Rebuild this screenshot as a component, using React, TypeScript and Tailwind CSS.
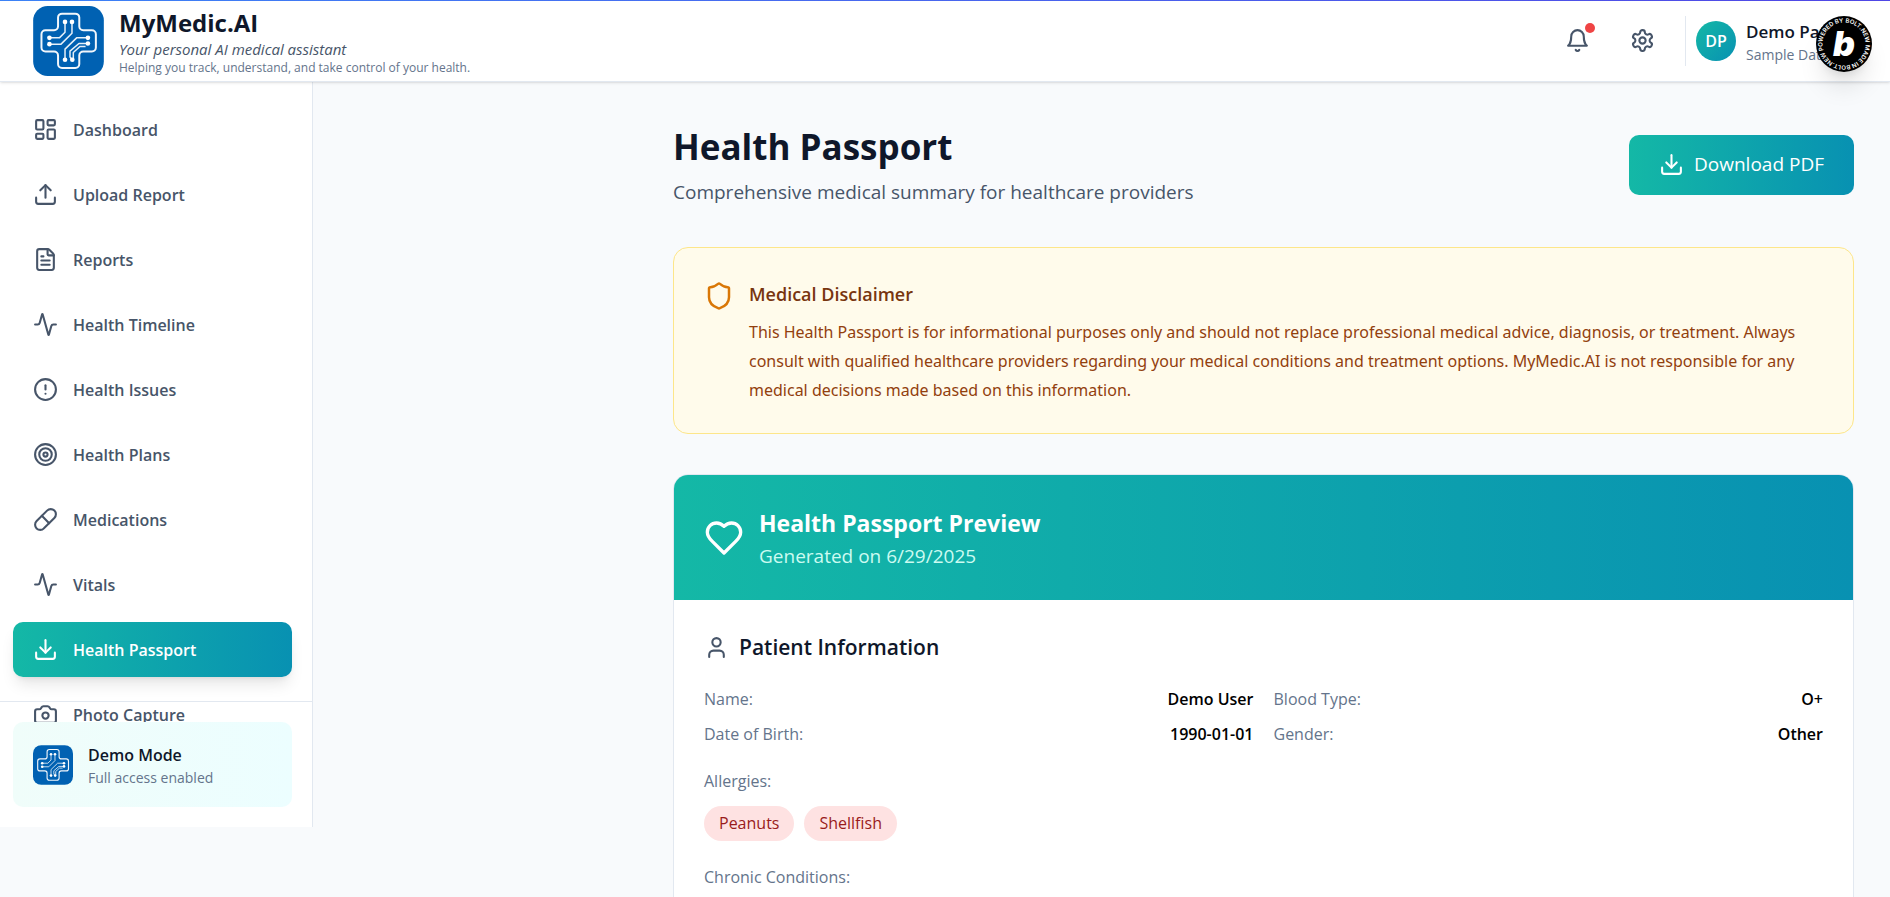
import {
  Activity, Camera, CircleAlert, Download, FileText,
  LayoutDashboard, Pill, Shield, Target, Upload, User
} from "lucide-react";
import clsx from "clsx";

interface NavItem {
  icon: typeof Activity;
  label: string;
  active?: boolean;
}

const navItems: NavItem[] = [
  { icon: LayoutDashboard, label: "Dashboard" },
  { icon: Upload, label: "Upload Report" },
  { icon: FileText, label: "Reports" },
  { icon: Activity, label: "Health Timeline" },
  { icon: CircleAlert, label: "Health Issues" },
  { icon: Target, label: "Health Plans" },
  { icon: Pill, label: "Medications" },
  { icon: Activity, label: "Vitals" },
  { icon: Download, label: "Health Passport", active: true },
  { icon: Camera, label: "Photo Capture" }
];

const patient = [
  { label: "Name:", value: "Demo User" },
  { label: "Blood Type:", value: "O+" },
  { label: "Date of Birth:", value: "1990-01-01" },
  { label: "Gender:", value: "Other" }
];

const allergies = ["Peanuts", "Shellfish"];

const Logo = ({ className }: { className?: string }) => (
  <svg viewBox="0 0 213 211" className={className} fill="none" aria-hidden="true">
    <rect width="213" height="211" rx="44" fill="#0061b2" />
    <path
      d="M87 23h40a12 12 0 0 1 12 12v26a12 12 0 0 0 12 12h26a12 12 0 0 1 12 12v40a12 12 0 0 1-12 12h-26a12 12 0 0 0-12 12v26a12 12 0 0 1-12 12H87a12 12 0 0 1-12-12v-26a12 12 0 0 0-12-12H37a12 12 0 0 1-12-12V85a12 12 0 0 1 12-12h26a12 12 0 0 0 12-12V35a12 12 0 0 1 12-12z"
      stroke="#f1f6fb"
      strokeWidth="6"
    />
    <g stroke="#e6f0f8" strokeWidth="4.5" strokeLinejoin="round">
      <path d="M96 48v31L79 96H49" />
      <path d="M117 48v34l-33 33H49" />
      <path d="M165 96h-34l-35 34v32" />
      <path d="M165 113h-27l-27 23v18l7 8" />
      <path d="M158 122h-17l-20 18v22" />
    </g>
    <g fill="#fff">
      <circle cx="96" cy="48" r="7" />
      <circle cx="117" cy="48" r="7" />
      <circle cx="49" cy="96" r="7" />
      <circle cx="49" cy="115" r="7" />
      <circle cx="165" cy="96" r="7" />
      <circle cx="165" cy="113" r="7" />
      <circle cx="96" cy="162" r="7" />
      <circle cx="118" cy="162" r="7" />
    </g>
  </svg>
);

const BellIcon = () => (
  <svg viewBox="0 0 24 24" className="size-[25px]" fill="none" stroke="currentColor" strokeWidth="2" strokeLinecap="round" strokeLinejoin="round">
    <path d="M6 8a6 6 0 0 1 12 0c0 7 3 9 3 9H3s3-2 3-9" />
    <path d="M10.3 21a1.94 1.94 0 0 0 3.4 0" />
  </svg>
);

const GearIcon = () => (
  <svg viewBox="0 0 24 24" className="size-[25px]" fill="none" stroke="currentColor" strokeWidth="2" strokeLinecap="round" strokeLinejoin="round">
    <path d="M12.22 2h-.44a2 2 0 0 0-2 2v.18a2 2 0 0 1-1 1.73l-.43.25a2 2 0 0 1-2 0l-.15-.08a2 2 0 0 0-2.73.73l-.22.38a2 2 0 0 0 .73 2.73l.15.1a2 2 0 0 1 1 1.72v.51a2 2 0 0 1-1 1.74l-.15.09a2 2 0 0 0-.73 2.73l.22.38a2 2 0 0 0 2.73.73l.15-.08a2 2 0 0 1 2 0l.43.25a2 2 0 0 1 1 1.73V20a2 2 0 0 0 2 2h.44a2 2 0 0 0 2-2v-.18a2 2 0 0 1 1-1.73l.43-.25a2 2 0 0 1 2 0l.15.08a2 2 0 0 0 2.73-.73l.22-.39a2 2 0 0 0-.73-2.73l-.15-.08a2 2 0 0 1-1-1.74v-.5a2 2 0 0 1 1-1.74l.15-.09a2 2 0 0 0 .73-2.73l-.22-.38a2 2 0 0 0-2.73-.73l-.15.08a2 2 0 0 1-2 0l-.43-.25a2 2 0 0 1-1-1.73V4a2 2 0 0 0-2-2z" />
    <circle cx="12" cy="12" r="3" />
  </svg>
);

const HeartIcon = () => (
  <svg viewBox="0 0 24 24" className="size-10 shrink-0" fill="none" stroke="currentColor" strokeWidth="2" strokeLinecap="round" strokeLinejoin="round">
    <path d="M19 14c1.49-1.46 3-3.21 3-5.5A5.5 5.5 0 0 0 16.5 3c-1.76 0-3 .5-4.5 2-1.5-1.5-2.74-2-4.5-2A5.5 5.5 0 0 0 2 8.5c0 2.3 1.5 4.05 3 5.5l7 7Z" />
  </svg>
);

const BoltBadge = () => (
  <a href="https://bolt.new" aria-label="Powered by Bolt.new" className="absolute top-4 right-[18px] rounded-full shadow-xl">
    <svg viewBox="0 0 56 56" className="size-14">
      <circle cx="28" cy="28" r="28" fill="#000" />
      <path id="ring" d="M7.5 34.5a21.5 21.5 0 1 1 41-13a21.5 21.5 0 1 1-41 13" fill="none" />
      <text fill="#fff" className="font-['Inter',sans-serif] text-[6px] font-semibold">
        <textPath href="#ring">POWERED BY BOLT.NEW MADE IN BOLT.NEW</textPath>
      </text>
      <text x="28" y="40" textAnchor="middle" fill="#fff" className="font-['Inter',sans-serif] text-[34px] font-black italic">b</text>
    </svg>
  </a>
);

const Header = () => (
  <header className="relative z-10 flex h-[82px] items-center justify-between border-b border-[#e2e8f0] bg-white pl-[33px] shadow-sm">
    <div className="absolute inset-x-0 top-0 h-px bg-linear-to-r from-[#3b82f6] to-[#4f46e5]" />
    <div className="flex items-center gap-[15px]">
      <Logo className="h-[70px] w-[71px]" />
      <div className="pt-0.5">
        <h1 className="text-[24px] leading-[30px] font-bold text-[#0f172a]">MyMedic.AI</h1>
        <p className="text-[15px] leading-[22px] text-[#475569] italic">Your personal AI medical assistant</p>
        <p className="text-[12px] leading-[16px] text-[#64748b]">Helping you track, understand, and take control of your health.</p>
      </div>
    </div>
    <div className="flex items-center">
      <button type="button" aria-label="Notifications" className="relative p-[10px] text-[#475569]">
        <BellIcon />
        <span className="absolute top-[5px] right-[5px] size-[10px] rounded-full bg-[#ef4444]" />
      </button>
      <button type="button" aria-label="Settings" className="ml-5 p-[10px] text-[#475569]">
        <GearIcon />
      </button>
      <div className="ml-5 flex h-[50px] w-[205px] items-center gap-[10px] border-l border-[#e2e8f0] pl-[10px]">
        <div className="flex size-10 shrink-0 items-center justify-center rounded-full bg-linear-to-br/srgb from-[#14b8a6] to-[#0891b2] text-[16px] font-semibold text-white">DP</div>
        <div className="overflow-hidden pt-1 whitespace-nowrap">
          <p className="text-[17px] leading-[25px] font-semibold text-[#0f172a]">Demo Patient</p>
          <p className="text-[14px] leading-[22px] text-[#64748b]">Sample Data</p>
        </div>
      </div>
    </div>
    <BoltBadge />
  </header>
);

const Sidebar = () => (
  <aside className="relative w-[313px] shrink-0 border-r border-[#e2e8f0] bg-white pt-5 pr-5 pb-[85px] pl-[13px]">
    <nav className="flex flex-col gap-[10px]">
      {navItems.map((item, index) => {
        const Icon = item.icon;
        return (
          <a
            key={index}
            href="#"
            className={clsx(
              "flex h-[55px] items-center gap-[15px] rounded-[10px] px-5 text-[16px] font-semibold",
              item.active
                ? "bg-linear-to-r/srgb from-[#14b8a6] to-[#0891b2] text-white shadow-lg"
                : "text-[#475569]"
            )}
          >
            <Icon className="size-[25px]" />
            {item.label}
          </a>
        );
      })}
    </nav>
    <div className="absolute inset-x-0 bottom-0 border-t border-[#e2e8f0] py-5 pr-5 pl-[13px]">
      <div className="flex h-[85px] items-center gap-[15px] rounded-[10px] bg-linear-to-r/srgb from-[#f0fdfa] to-[#ecfeff] px-5">
        <Logo className="size-10" />
        <div className="pt-0.5">
          <p className="text-[16px] leading-[25px] font-semibold text-[#0f172a]">Demo Mode</p>
          <p className="text-[14px] leading-[20px] text-[#64748b]">Full access enabled</p>
        </div>
      </div>
    </div>
  </aside>
);

const PassportPreview = () => (
  <section className="overflow-hidden rounded-[15px] border border-[#e2e8f0] bg-white">
    <div className="flex items-center gap-[15px] bg-linear-to-r/srgb from-[#14b8a6] to-[#0891b2] p-[30px] text-white">
      <HeartIcon />
      <div>
        <h2 className="text-[23px] leading-[37px] font-bold">Health Passport Preview</h2>
        <p className="text-[19px] leading-[28px] text-[#ccfbf1]">Generated on 6/29/2025</p>
      </div>
    </div>
    <div className="p-[30px]">
      <h3 className="flex items-center gap-[10px] text-[21px] leading-[35px] font-semibold text-[#0f172a]">
        <User className="size-[25px] text-[#475569]" />
        Patient Information
      </h3>
      <dl className="mt-[22px] grid grid-cols-2 gap-x-5 gap-y-[10px] text-[16px] leading-[25px]">
        {patient.map((field) => (
          <div key={field.label} className="flex justify-between">
            <dt className="text-[#64748b]">{field.label}</dt>
            <dd className="font-semibold text-black">{field.value}</dd>
          </div>
        ))}
      </dl>
      <div className="mt-[22px] text-[16px] leading-[25px]">
        <p className="text-[#64748b]">Allergies:</p>
        <div className="mt-3 flex gap-[10px]">
          {allergies.map((allergy) => (
            <span key={allergy} className="rounded-full bg-[#fee2e2] px-[15px] py-[5px] text-[#991b1b]">{allergy}</span>
          ))}
        </div>
      </div>
      <p className="mt-6 text-[16px] leading-[25px] text-[#64748b]">Chronic Conditions:</p>
    </div>
  </section>
);

const App = () => {
  return (
    <div className="min-h-screen bg-[#f8fafc] font-['Open_Sans',sans-serif]">
      <Header />
      <div className="flex items-start">
        <Sidebar />
        <main className="ml-[360px] min-w-0 flex-1 pt-10 pr-9">
          <div className="flex items-center justify-between">
            <div>
              <h1 className="text-[35px] leading-[50px] font-bold text-[#0f172a]">Health Passport</h1>
              <p className="mt-[5px] text-[19px] leading-[30px] text-[#475569]">Comprehensive medical summary for healthcare providers</p>
            </div>
            <button type="button" className="flex h-[60px] items-center gap-[10px] rounded-[10px] bg-linear-to-r/srgb from-[#14b8a6] to-[#0891b2] px-[30px] text-[19px] text-white">
              <Download className="size-[25px]" />
              Download PDF
            </button>
          </div>

          <section className="mt-10 flex items-start gap-[15px] rounded-[15px] border border-[#fde68a] bg-[#fffbeb] px-[30px] pt-[30px] pb-7">
            <Shield className="mt-[3px] size-[30px] shrink-0 text-[#d97706]" />
            <div>
              <h3 className="text-[18px] leading-[32px] font-semibold text-[#78350f]">Medical Disclaimer</h3>
              <p className="mt-2 font-['Noto_Sans',sans-serif] text-[16px] leading-[29px] text-[#92400e]">
                This Health Passport is for informational purposes only and should not replace professional medical advice,
                diagnosis, or treatment. Always consult with qualified healthcare providers regarding your medical
                conditions and treatment options. MyMedic.AI is not responsible for any medical decisions made based on this
                information.
              </p>
            </div>
          </section>

          <div className="mt-10">
            <PassportPreview />
          </div>
        </main>
      </div>
    </div>
  );
};

export default App;
